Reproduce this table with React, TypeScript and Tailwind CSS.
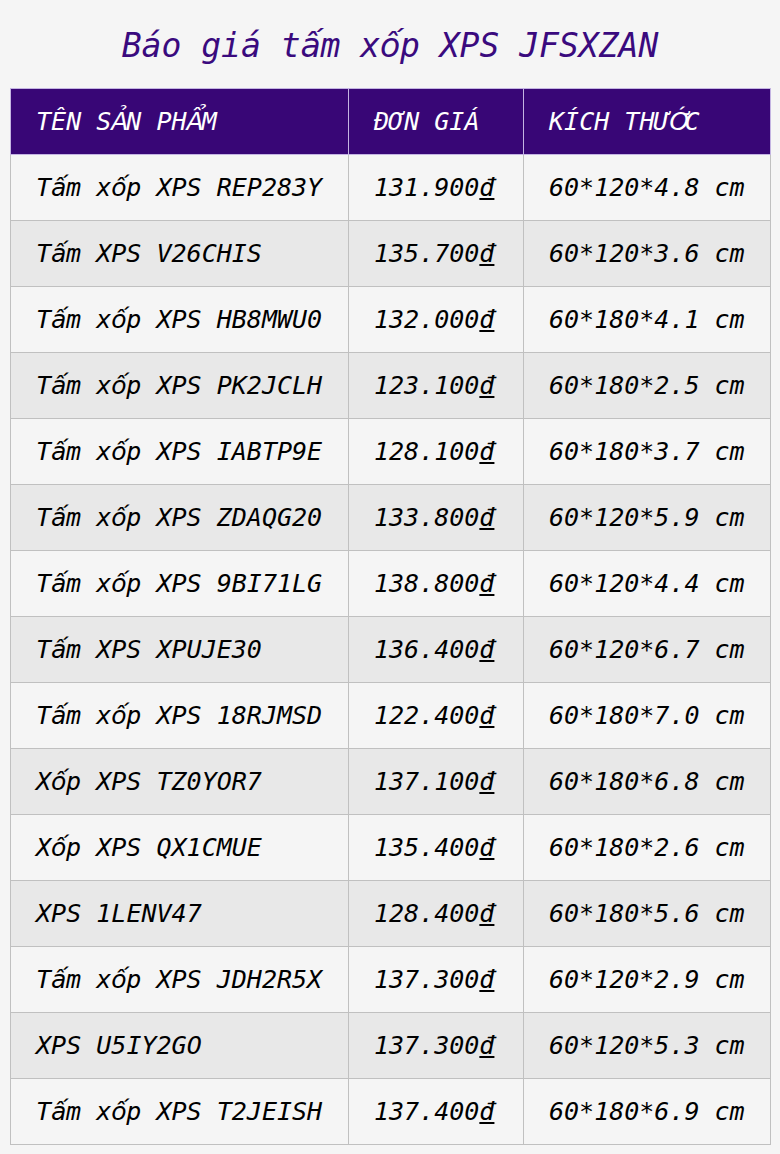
import React from "react";

function V({ text }: { text: string }) {
  const chars = Array.from(text.normalize("NFC"));
  return (
    <>
      {chars.map((c, i) => {
        const cp = c.codePointAt(0) || 0;
        if (cp >= 0x1e00 && cp <= 0x1eff) {
          return (
            <span key={i} className="font-['DejaVu_Sans'] inline-block w-[0.602em] text-center">
              {c}
            </span>
          );
        }
        return <React.Fragment key={i}>{c}</React.Fragment>;
      })}
    </>
  );
}

const rows: [string, string, string][] = [
  ["Tấm xốp XPS REP283Y", "131.900", "60*120*4.8 cm"],
  ["Tấm XPS V26CHIS", "135.700", "60*120*3.6 cm"],
  ["Tấm xốp XPS HB8MWU0", "132.000", "60*180*4.1 cm"],
  ["Tấm xốp XPS PK2JCLH", "123.100", "60*180*2.5 cm"],
  ["Tấm xốp XPS IABTP9E", "128.100", "60*180*3.7 cm"],
  ["Tấm xốp XPS ZDAQG20", "133.800", "60*120*5.9 cm"],
  ["Tấm xốp XPS 9BI71LG", "138.800", "60*120*4.4 cm"],
  ["Tấm XPS XPUJE30", "136.400", "60*120*6.7 cm"],
  ["Tấm xốp XPS 18RJMSD", "122.400", "60*180*7.0 cm"],
  ["Xốp XPS TZ0YOR7", "137.100", "60*180*6.8 cm"],
  ["Xốp XPS QX1CMUE", "135.400", "60*180*2.6 cm"],
  ["XPS 1LENV47", "128.400", "60*180*5.6 cm"],
  ["Tấm xốp XPS JDH2R5X", "137.300", "60*120*2.9 cm"],
  ["XPS U5IY2GO", "137.300", "60*120*5.3 cm"],
  ["Tấm xốp XPS T2JEISH", "137.400", "60*180*6.9 cm"],
];

export default function App() {
  return (
    <div className="min-h-[1154px] bg-[#f5f5f5] px-[10px] pt-[26px] italic font-['DejaVu_Sans_Mono',monospace]">
      <h1 className="text-center text-[33px] leading-[40px] text-[#3a0a7e] mb-[22px]">
        <V text="Báo giá tấm xốp XPS JFSXZAN" />
      </h1>
      <table className="w-[760px] border-collapse table-fixed text-[25px]">
        <colgroup>
          <col className="w-[338px]" />
          <col className="w-[175px]" />
          <col className="w-[247px]" />
        </colgroup>
        <thead>
          <tr className="h-[66px] bg-[#380676] text-white">
            <th className="border border-[#c4b4e2] px-[25px] text-left font-normal whitespace-nowrap">
              <V text="TÊN SẢN PHẨM" />
            </th>
            <th className="border border-[#c4b4e2] px-[25px] text-left font-normal whitespace-nowrap">
              <V text="ĐƠN GIÁ" />
            </th>
            <th className="border border-[#c4b4e2] px-[25px] text-left font-normal whitespace-nowrap">
              <V text="KÍCH THƯỚC" />
            </th>
          </tr>
        </thead>
        <tbody>
          {rows.map((r, i) => (
            <tr key={i} className={`h-[66px] text-black ${i % 2 === 0 ? "bg-[#f5f5f5]" : "bg-[#e8e8e8]"}`}>
              <td className="border border-[#c0c0c0] px-[25px] whitespace-nowrap">
                <V text={r[0]} />
              </td>
              <td className="border border-[#c0c0c0] px-[25px] whitespace-nowrap">
                {r[1]}
                <span className="underline">đ</span>
              </td>
              <td className="border border-[#c0c0c0] px-[25px] whitespace-nowrap">{r[2]}</td>
            </tr>
          ))}
        </tbody>
      </table>
    </div>
  );
}
